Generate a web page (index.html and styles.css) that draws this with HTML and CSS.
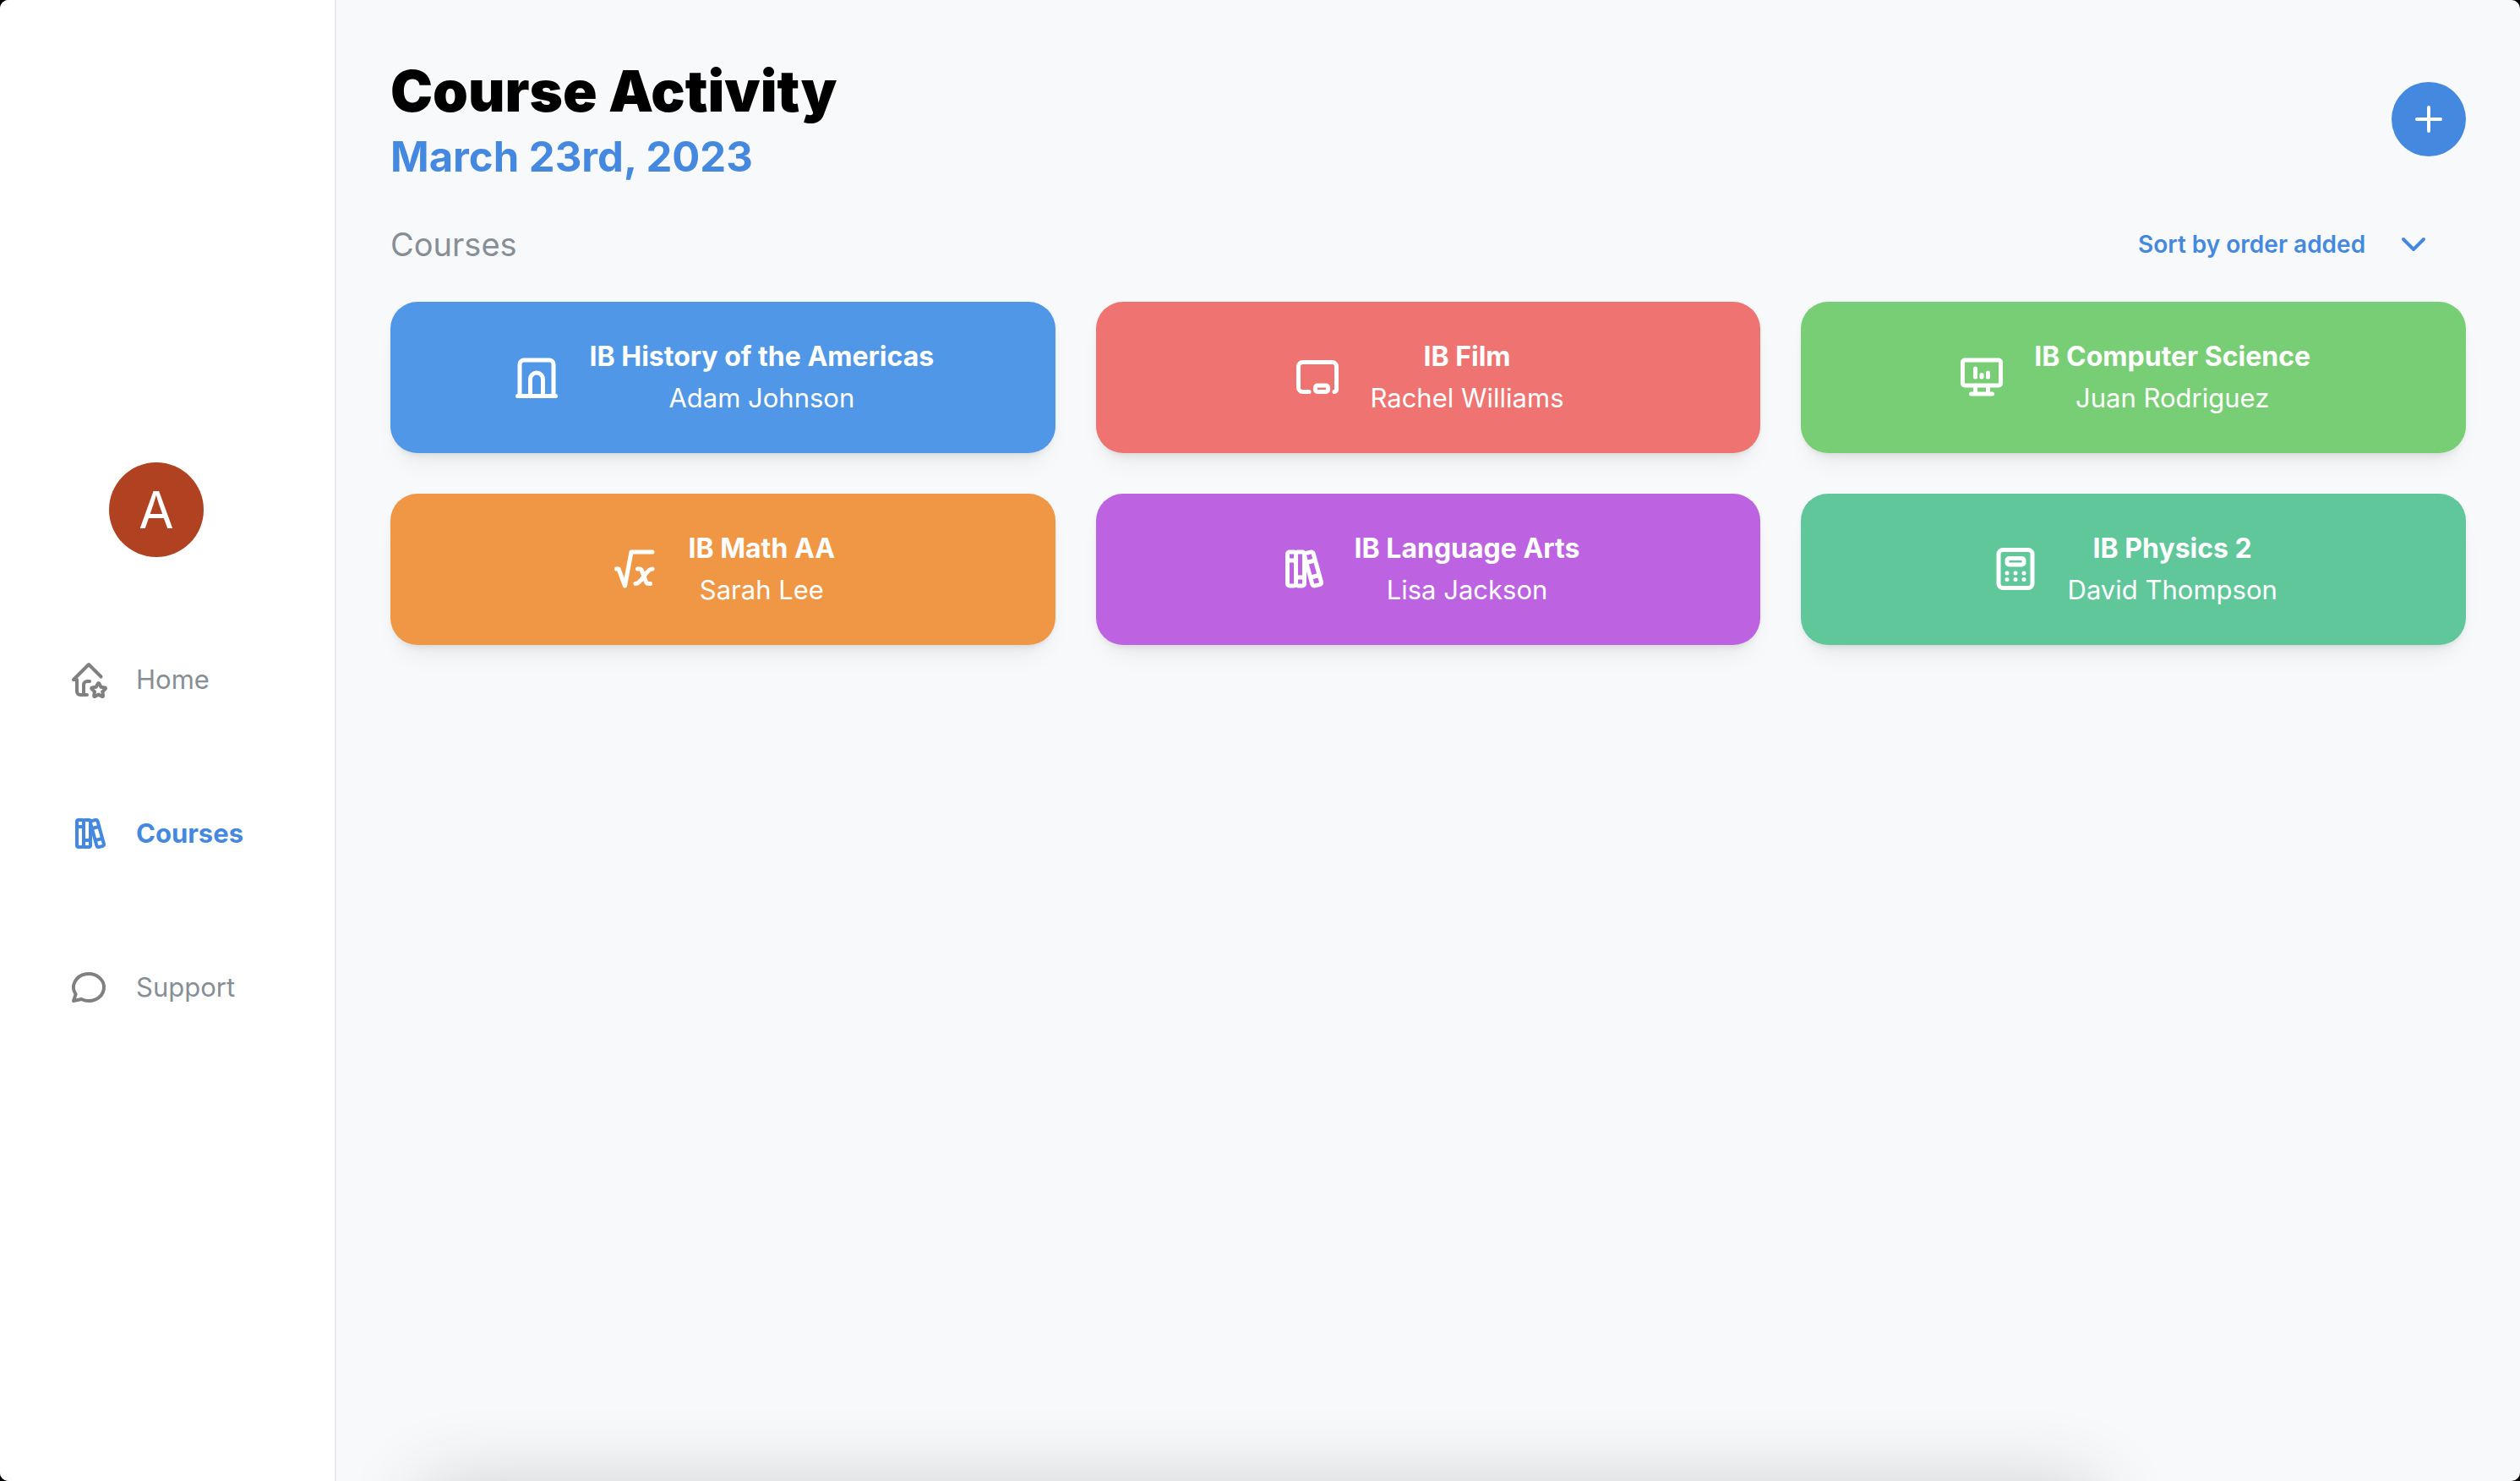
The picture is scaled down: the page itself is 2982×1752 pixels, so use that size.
FILE: index.html
```html
<!DOCTYPE html>
<html lang="en">
<head>
<meta charset="utf-8">
<meta name="viewport" content="width=device-width, initial-scale=1">
<title>Course Activity</title>
<link rel="stylesheet" href="styles.css">
</head>
<body>
<svg class="sprite" aria-hidden="true">
  <symbol id="books" viewBox="0 0 24 24">
    <rect x="5" y="4" width="4" height="16" rx="1"/>
    <rect x="9" y="4" width="4" height="16" rx="1"/>
    <path d="M5 8h4M9 16h4"/>
    <path d="M13.803 4.56l2.184-.53c.562-.135 1.133.19 1.282.732l3.695 13.418a1.02 1.02 0 0 1-.634 1.219l-.133.041l-2.184.53c-.562.135-1.133-.19-1.282-.732l-3.695-13.418a1.02 1.02 0 0 1 .634-1.219l.133-.041z"/>
    <path d="M14 9l4-1M16 16l3.923-.98"/>
  </symbol>
</svg>
<div class="app">
  <aside class="sidebar">
    <div class="avatar">A</div>
    <nav class="nav">
      <a class="nav-link" href="#home">
        <svg class="icon icon-muted" viewBox="0 0 24 24" aria-hidden="true"><path d="M19.258 10.258l-7.258-7.258l-9 9h2v7a2 2 0 0 0 2 2h4"/><path d="M9 21v-6a2 2 0 0 1 2-2h1.5"/><path d="M17.8 20.817l-2.172 1.138a.392.392 0 0 1-.568-.41l.415-2.411l-1.757-1.707a.389.389 0 0 1 .217-.665l2.428-.352l1.086-2.193a.392.392 0 0 1 .702 0l1.086 2.193l2.428.352a.39.39 0 0 1 .217.665l-1.757 1.707l.414 2.41a.39.39 0 0 1-.567.411l-2.172-1.138z"/></svg>
        <span>Home</span>
      </a>
      <a class="nav-link nav-link-active" href="#courses" aria-current="page">
        <svg class="icon" aria-hidden="true"><use href="#books"/></svg>
        <span>Courses</span>
      </a>
      <a class="nav-link" href="#support">
        <svg class="icon icon-muted" viewBox="0 0 24 24" aria-hidden="true"><path d="M3 20l1.3-3.9a9 8 0 1 1 3.4 2.9l-4.7 1"/></svg>
        <span>Support</span>
      </a>
    </nav>
  </aside>
  <main class="main">
    <header class="header">
      <div>
        <h1 class="title">Course Activity</h1>
        <p class="date">March 23rd, 2023</p>
      </div>
      <button class="add" type="button" aria-label="Add course">
        <svg class="icon" viewBox="0 0 24 24" aria-hidden="true"><path d="M12 5v14M5 12h14"/></svg>
      </button>
    </header>
    <div class="toolbar">
      <h2 class="section-title">Courses</h2>
      <div class="sort">
        <select class="sort-select" aria-label="Sort courses">
          <option>Sort by order added</option>
        </select>
        <svg class="icon sort-icon" viewBox="0 0 24 24" aria-hidden="true"><path d="M6 9l6 6l6-6"/></svg>
      </div>
    </div>
    <section class="grid">
      <button class="card card-blue" type="button">
        <svg class="icon icon-large" viewBox="0 0 24 24" aria-hidden="true"><path d="M3 21h18"/><path d="M4 21v-15a2 2 0 0 1 2-2h12a2 2 0 0 1 2 2v15"/><path d="M9 21v-8a3 3 0 0 1 6 0v8"/></svg>
        <span class="card-text"><strong>IB History of the Americas</strong><span>Adam Johnson</span></span>
      </button>
      <button class="card card-red" type="button">
        <svg class="icon icon-large" viewBox="0 0 24 24" aria-hidden="true"><path d="M8 19h-3a2 2 0 0 1-2-2v-10a2 2 0 0 1 2-2h14a2 2 0 0 1 2 2v11a1 1 0 0 1-1 1"/><rect x="11" y="16" width="6" height="3" rx="1"/></svg>
        <span class="card-text"><strong>IB Film</strong><span>Rachel Williams</span></span>
      </button>
      <button class="card card-green" type="button">
        <svg class="icon icon-large" viewBox="0 0 24 24" aria-hidden="true"><rect x="3" y="4" width="18" height="12" rx="1"/><path d="M7 20h10M9 16v4M15 16v4M9 12v-4M12 12v-1M15 12v-2"/></svg>
        <span class="card-text"><strong>IB Computer Science</strong><span>Juan Rodriguez</span></span>
      </button>
      <button class="card card-orange" type="button">
        <svg class="icon icon-large" viewBox="0 0 24 24" aria-hidden="true"><path d="M13 12h1c1 0 1 1 2.016 3.527c.984 2.473.984 3.473 1.984 3.473h1"/><path d="M12 19c1.5 0 3-2 4-3.5s2.5-3.5 4-3.5"/><path d="M3 12h1l3 8l3-16h10"/></svg>
        <span class="card-text"><strong>IB Math AA</strong><span>Sarah Lee</span></span>
      </button>
      <button class="card card-purple" type="button">
        <svg class="icon icon-large" aria-hidden="true"><use href="#books"/></svg>
        <span class="card-text"><strong>IB Language Arts</strong><span>Lisa Jackson</span></span>
      </button>
      <button class="card card-teal" type="button">
        <svg class="icon icon-large" viewBox="0 0 24 24" aria-hidden="true"><rect x="4" y="3" width="16" height="18" rx="2"/><rect x="8" y="7" width="8" height="3" rx="1"/><path d="M8 14v.01M12 14v.01M16 14v.01M8 17v.01M12 17v.01M16 17v.01"/></svg>
        <span class="card-text"><strong>IB Physics 2</strong><span>David Thompson</span></span>
      </button>
    </section>
    <div class="bottom-shade"></div>
  </main>
</div>
</body>
</html>
```
FILE: styles.css
```css
* { box-sizing: border-box; }

html { background: #000; }

body {
  margin: 0;
  font-family: Inter, "Liberation Sans", sans-serif;
  font-size: 31px;
  color: #868e96;
}

h1, h2, p { margin: 0; }

button, select {
  font: inherit;
  border: 0;
  cursor: pointer;
}

.sprite { position: absolute; width: 0; height: 0; }

.icon {
  flex: none;
  width: 48px;
  height: 48px;
  fill: none;
  stroke: currentColor;
  stroke-width: 2;
  stroke-linecap: round;
  stroke-linejoin: round;
}

.icon-large { width: 60px; height: 60px; }
.icon-muted { color: #808080; }

.app {
  display: flex;
  min-height: 100vh;
  overflow: hidden;
  border-radius: 10px;
  background: #f8f9fb;
}

.sidebar {
  display: flex;
  flex-direction: column;
  justify-content: center;
  gap: 121px;
  flex: none;
  width: 398px;
  padding: 0 0 14px 81px;
  background: #fff;
  border-right: 2px solid #e9ebf2;
}

.avatar {
  display: grid;
  place-items: center;
  width: 112px;
  height: 112px;
  margin-left: 48px;
  border-radius: 50%;
  background: #b04121;
  color: #fff;
  font-size: 60px;
}

.nav {
  display: flex;
  flex-direction: column;
  gap: 134px;
}

.nav-link {
  display: flex;
  align-items: center;
  gap: 32px;
  line-height: 48px;
  color: inherit;
  text-decoration: none;
}

.nav-link-active { color: #4489df; font-weight: 700; }

.main {
  position: relative;
  flex: 1;
  min-width: 0;
  padding: 63px 64px;
}

.header {
  display: flex;
  align-items: center;
  justify-content: space-between;
}

.title {
  color: #000;
  font-size: 67px;
  font-weight: 900;
  line-height: 90px;
}

.date {
  color: #4489df;
  font-size: 49px;
  font-weight: 700;
  line-height: 66px;
}

.add {
  display: grid;
  place-items: center;
  width: 88px;
  height: 88px;
  padding: 0;
  border-radius: 50%;
  background: #4489df;
  color: #fff;
}

.toolbar {
  display: flex;
  align-items: center;
  justify-content: space-between;
  margin: 38px 0 36px;
}

.section-title {
  font-size: 38px;
  font-weight: 400;
  line-height: 64px;
}

.sort {
  display: grid;
  align-items: center;
  color: #4489df;
}

.sort-select {
  grid-area: 1 / 1;
  appearance: none;
  height: 64px;
  padding: 0 118px 0 0;
  background: transparent;
  color: inherit;
  font-size: 28px;
  font-weight: 600;
}

.sort-icon {
  grid-area: 1 / 1;
  justify-self: end;
  margin-right: 38px;
  pointer-events: none;
}

.grid {
  display: grid;
  grid-template-columns: repeat(3, 1fr);
  gap: 48px;
}

.card {
  display: flex;
  align-items: center;
  justify-content: center;
  gap: 32px;
  min-height: 179px;
  padding: 31px 32px 33px;
  border-radius: 32px;
  color: #fff;
  box-shadow: 0 2px 6px rgba(0, 0, 0, .05), 0 20px 30px -10px rgba(0, 0, 0, .06), 0 14px 14px -10px rgba(0, 0, 0, .05);
}

.card-text {
  display: flex;
  flex-direction: column;
  line-height: 49px;
  text-align: center;
}

.card-text strong { font-size: 32px; font-weight: 700; }

.card-blue { background: #5097e8; }
.card-red { background: #ee7371; }
.card-green { background: #77ce75; }
.card-orange { background: #f09745; }
.card-purple { background: #bd63e2; }
.card-teal { background: #60c79b; }

/* Soft shadow that rises over the lower edge of the content */
.bottom-shade {
  position: absolute;
  top: 100%;
  left: 96px;
  right: 496px;
  height: 100px;
  border-radius: 32px;
  box-shadow: 0 0 90px rgba(0, 0, 0, .16);
}
```
